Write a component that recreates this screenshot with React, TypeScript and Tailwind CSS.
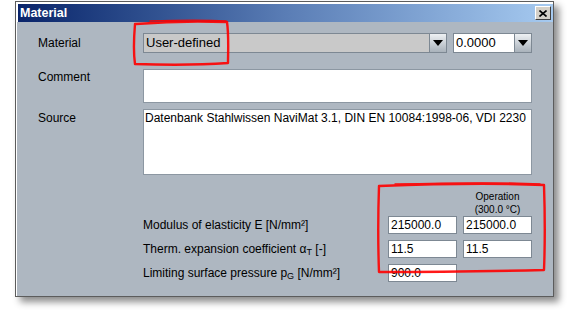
import React from "react";

const Arrow = () => (
  <div className="w-[18px] h-full border border-[#7d8893] bg-gradient-to-b from-[#eef1f4] to-[#a9b2bb] flex items-center justify-center">
    <svg width="10" height="6" viewBox="0 0 10 6">
      <polygon points="0,0 10,0 5,6" fill="#000" />
    </svg>
  </div>
);

const Field = ({ v }: { v: string }) => (
  <div className="h-[18px] bg-white border border-[#7d8893] text-[12px] leading-[16px] pl-[2px] text-black">{v}</div>
);

export default function App() {
  return (
    <div className="relative w-[571px] h-[312px] bg-white pt-[1px] pl-[15px] font-['Liberation_Sans',Arial,sans-serif] text-black overflow-hidden">
      <div className="w-[539px] h-[296px] border border-[#5c5c5c] flex flex-col shadow-[5px_5px_7px_rgba(0,0,0,0.45)]">
        <div className="flex-1 flex flex-col border-l border-t border-white">
          <div className="ml-[1px] mt-[1px] h-[18px] bg-gradient-to-r from-[#0a246a] via-[#5a7db5] to-[#a6caf0] flex items-center justify-between pl-[2px] pr-[2px]">
            <span className="text-white font-bold text-[12.5px] leading-none">Material</span>
            <div className="w-[16px] h-[14px] bg-[#d4d0c8] border border-t-white border-l-white border-r-[#404040] border-b-[#404040] flex items-center justify-center">
              <svg width="8" height="7" viewBox="0 0 8 7">
                <path d="M0.5 0.5 L7.5 6.5 M7.5 0.5 L0.5 6.5" stroke="#000" strokeWidth="1.6" />
              </svg>
            </div>
          </div>
          <div className="flex-1 bg-[#aeb7c1] pl-[21px] pt-[11px] text-[12px]">
            <div className="flex items-center h-[20px]">
              <div className="w-[105px]">Material</div>
              <div className="w-[304px] h-full flex">
                <div className="flex-1 bg-[#c9c9c9] border border-r-0 border-[#7d8893] text-[13px] leading-[18px] pl-[2px]">User-defined</div>
                <Arrow />
              </div>
              <div className="ml-[6px] w-[79px] h-full flex">
                <div className="flex-1 bg-white border border-r-0 border-[#7d8893] text-[13px] leading-[18px] pl-[2px]">0.0000</div>
                <Arrow />
              </div>
            </div>
            <div className="flex mt-[16px]">
              <div className="w-[105px] pt-[1px] leading-[14px]">Comment</div>
              <div className="w-[389px] h-[34px] bg-white border border-[#8c97a2]" />
            </div>
            <div className="flex mt-[6px]">
              <div className="w-[105px] pt-[2px] leading-[14px]">Source</div>
              <div className="w-[389px] h-[66px] bg-white border border-[#8c97a2] pl-[1px] pt-[1px] leading-[14px] whitespace-nowrap">
                Datenbank Stahlwissen NaviMat 3.1, DIN EN 10084:1998-06, VDI 2230
              </div>
            </div>
            <div className="ml-[105px] mt-[15px] grid grid-cols-[239px_69px_69px] gap-x-[6px] gap-y-[6px]">
              <div />
              <div />
              <div className="text-[10px] leading-[13px] text-center -mb-[6px] h-[26px]">
                Operation
                <br />
                (300.0 °C)
              </div>
              <div className="self-center leading-[14px]">Modulus of elasticity E [N/mm²]</div>
              <Field v="215000.0" />
              <Field v="215000.0" />
              <div className="self-center leading-[14px]">
                Therm. expansion coefficient α<sub className="text-[9px] relative top-[2px]">T</sub> [-]
              </div>
              <Field v="11.5" />
              <Field v="11.5" />
              <div className="self-center leading-[14px]">
                Limiting surface pressure p<sub className="text-[9px] relative top-[2px]">G</sub> [N/mm²]
              </div>
              <Field v="900.0" />
              <div />
            </div>
          </div>
        </div>
      </div>
      <svg className="absolute left-0 top-0 pointer-events-none" width="571" height="312">
        <g fill="none" stroke="#ff0000" strokeWidth="2.4" strokeLinecap="round" strokeLinejoin="round" opacity="0.9">
          <path d="M136 24 C160 22 200 21 227 22 C229 36 228 52 228 63 C200 65 165 65 135 64 C133 50 134 36 135 24" />
          <path d="M150 21 C180 20 210 20 226 21" strokeWidth="1.4" />
          <path d="M379 186 C430 184 500 183 544 185 C545 215 545 245 544 270 C500 271 430 272 379 272 C378 245 378 215 379 186" />
          <path d="M395 184 C440 183 500 182 540 184" strokeWidth="1.4" />
        </g>
      </svg>
    </div>
  );
}
